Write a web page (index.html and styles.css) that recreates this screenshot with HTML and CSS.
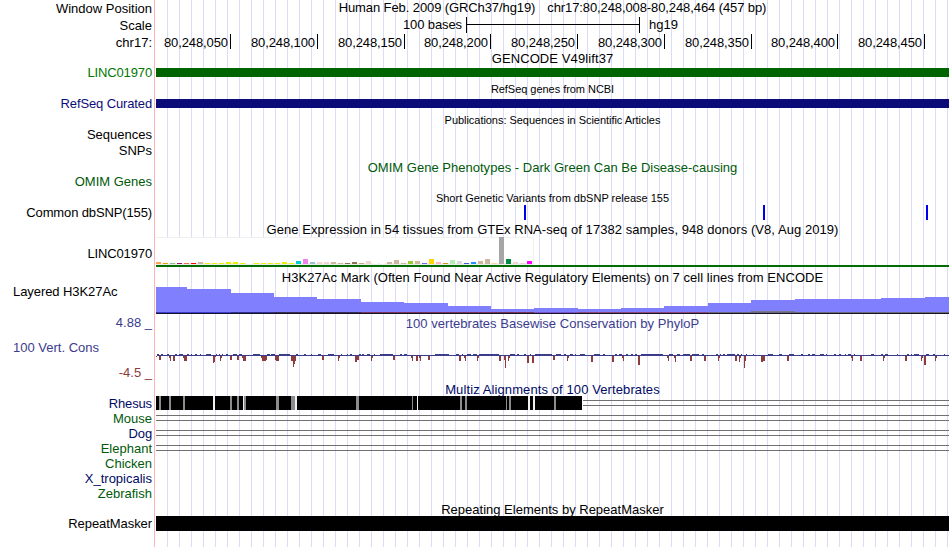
FILE: index.html
```html
<!DOCTYPE html>
<html lang="en">
<head>
<meta charset="utf-8">
<title>chr17:80,248,008-80,248,464</title>
<link rel="stylesheet" href="styles.css">
</head>
<body>
<main class="browser">
  <div class="row ruler"><div class="label low">Window Position</div><div class="title region"><span>Human Feb. 2009 (GRCh37/hg19)</span><span>chr17:80,248,008-80,248,464 (457 bp)</span></div></div>
  <div class="row ruler"><div class="label low">Scale</div><div class="scale"><span class="scale-name">100 bases</span><span class="scale-bar"></span><span>hg19</span></div></div>
  <div class="row ruler"><div class="label low">chr17:</div><div class="ticks" id="ticks"></div></div>

  <div class="row head gencode"><div class="title wide">GENCODE V49lift37</div></div>
  <div class="row item"><div class="label green narrow">LINC01970</div><div class="bar bar-green"></div></div>
  <div class="row head small-head"><div class="title small tight">RefSeq genes from NCBI</div></div>
  <div class="row item"><div class="label navy narrow">RefSeq Curated</div><div class="bar bar-navy"></div></div>
  <div class="row head small-head"><div class="title small tight">Publications: Sequences in Scientific Articles</div></div>
  <div class="row ruler-short"><div class="label">Sequences</div></div>
  <div class="row item"><div class="label">SNPs</div></div>
  <div class="row head omim"><div class="title forest omim-title">OMIM Gene Phenotypes - Dark Green Can Be Disease-causing</div></div>
  <div class="row item"><div class="label forest">OMIM Genes</div></div>
  <div class="row head small-head"><div class="title small">Short Genetic Variants from dbSNP release 155</div></div>
  <div class="row item"><div class="label narrow">Common dbSNP(155)</div><svg class="plot" id="snps" viewBox="156 205 793 15" height="15"></svg></div>
  <div class="row head gtex-head"><div class="title gtex-title">Gene Expression in 54 tissues from GTEx RNA-seq of 17382 samples, 948 donors (V8, Aug 2019)</div></div>
  <div class="row gtex"><div class="label narrow">LINC01970</div><svg class="plot" id="gtex" viewBox="156 237 793 31" height="31"></svg></div>
  <div class="row head omim"><div class="title histone-title">H3K27Ac Mark (Often Found Near Active Regulatory Elements) on 7 cell lines from ENCODE</div></div>
  <div class="row histone"><div class="label left slim">Layered H3K27Ac</div><svg class="plot" id="histone" viewBox="156 284 793 30" height="30"></svg></div>
  <div class="row phylop-head"><div class="label low slate">4.88 _</div><div class="title slate phylop-title">100 vertebrates Basewise Conservation by PhyloP</div></div>
  <div class="row phylop"><div class="phylop-labels"><div class="label left slate">100 Vert. Cons</div><div class="label brick">-4.5 _</div></div><svg class="plot" id="phylop" viewBox="156 331 793 49" height="49"></svg></div>
  <div class="row head omim"><div class="title ink wide">Multiz Alignments of 100 Vertebrates</div></div>
  <div class="row item"><div class="label ink narrow">Rhesus</div><svg class="plot" id="rhesus" viewBox="156 396 793 15" height="15"></svg></div>
  <div class="row item"><div class="label forest">Mouse</div><div class="gap-lines"></div></div>
  <div class="row item"><div class="label ink narrow">Dog</div><div class="gap-lines"></div></div>
  <div class="row item"><div class="label forest">Elephant</div><div class="gap-lines"></div></div>
  <div class="row item"><div class="label forest">Chicken</div></div>
  <div class="row item"><div class="label ink">X_tropicalis</div></div>
  <div class="row item"><div class="label forest">Zebrafish</div></div>
  <div class="row head repeat-head"><div class="title">Repeating Elements by RepeatMasker</div></div>
  <div class="row item"><div class="label slim">RepeatMasker</div><div class="bar-full"></div></div>
</main>
<script src="tracks.js"></script>
</body>
</html>
```
FILE: styles.css
```css
body {
  margin: 0;
  background: #fff;
  color: #000;
  font: 13px/15px "Liberation Sans", Arial, sans-serif;
}

/* Guide lines every 12px, with the red divider left of the plot */
.browser {
  width: 949px;
  height: 547px;
  overflow: hidden;
  background:
    linear-gradient(#ffb4b4, #ffb4b4) 154px 0 / 1px 100% no-repeat,
    repeating-linear-gradient(to right, #dcdcf8 0 1px, transparent 1px 12px) 167px 0 / 782px 100% no-repeat,
    #fff;
}

.row {
  display: grid;
  grid-template-columns: 152px 793px;
  column-gap: 4px;
  align-items: start;
  white-space: nowrap;
}
.ruler { height: 17px; }
.item { height: 15px; }
.ruler-short { height: 16px; }
.head { height: 16px; box-sizing: border-box; padding-top: 2px; }
.head .title { grid-column: 2; }
.gencode { height: 14px; padding-top: 0; }
.small-head { padding-top: 3px; }
.item + .head.gtex-head { height: 17px; }
.repeat-head { height: 15px; padding-top: 1px; }
.item + .small-head { height: 16px; }

.label { text-align: right; height: 15px; }
.low { padding-top: 1px; }
.left { text-align: left; padding-left: 13px; }
.narrow { letter-spacing: -0.13px; }
.slim { letter-spacing: -0.07px; }
.title { text-align: center; height: 15px; }
.small { font-size: 11px; line-height: 12px; height: 12px; }
.tight { letter-spacing: -0.04px; }
.wide { letter-spacing: 0.1px; }
.omim-title { letter-spacing: 0.02px; }
.gtex-title { letter-spacing: 0.05px; }
.histone-title { letter-spacing: 0.045px; }
.phylop-title { letter-spacing: 0.03px; }

.region { display: flex; justify-content: center; gap: 12px; letter-spacing: -0.1px; }
.scale { display: flex; height: 17px; }
.scale-name { width: 306px; margin-right: 4px; text-align: right; letter-spacing: -0.1px; }
.scale-bar {
  width: 172px;
  height: 16px;
  margin-right: 9px;
  border: solid #000;
  border-width: 0 1px;
  background: linear-gradient(#000, #000) 0 7px / 100% 1px no-repeat;
}
.ticks { display: flex; height: 17px; }
.tick {
  box-sizing: border-box;
  height: 15px;
  padding: 1px 2px 0 0;
  border-right: 1px solid #000;
  text-align: right;
  letter-spacing: -0.1px;
}

.green { color: #007800; }
.forest { color: #005a0a; }
.navy { color: #0c0c78; }
.ink { color: #000a64; }
.slate { color: #3c3c8c; }
.brick { color: #8c3c3c; }

.bar { height: 9px; margin-top: 3px; }
.bar-green { background: #006400; }
.bar-navy { background: #0c0c78; }
.bar-full { height: 15px; background: #000; }
.plot { display: block; width: 793px; shape-rendering: crispEdges; }

.gtex { height: 31px; }
.gtex .label { padding-top: 9px; }
.histone { height: 30px; }
.phylop-head { height: 17px; }
.phylop-head .title { padding-top: 2px; }
.phylop { height: 49px; }
.phylop-labels { display: grid; row-gap: 10px; padding-top: 9px; }

.gap-lines {
  height: 4px;
  margin-top: 4px;
  border: solid #707070;
  border-width: 1px 0;
}
```
FILE: tracks.js
```js
const byId = id => document.getElementById(id);

function draw(svg, fill, d) {
  const path = document.createElementNS('http://www.w3.org/2000/svg', 'path');
  path.setAttribute('fill', fill);
  path.setAttribute('d', d);
  svg.appendChild(path);
}
const box = (x, y, w, h) => `M${x} ${y}h${w}v${h}h${-w}z`;

/* Coordinate ruler: label and width of each interval */
[['80,248,050', 75], ['80,248,100', 87], ['80,248,150', 87], ['80,248,200', 86], ['80,248,250', 87],
 ['80,248,300', 87], ['80,248,350', 87], ['80,248,400', 86], ['80,248,450', 87]].forEach(([text, width]) => {
  const tick = document.createElement('span');
  tick.className = 'tick';
  tick.style.width = width + 'px';
  tick.textContent = text;
  byId('ticks').appendChild(tick);
});

/* Common variants */
draw(byId('snps'), '#0000f0', [524, 763, 926].map(x => box(x, 205, 2, 15)).join(''));

/* Expression per tissue: colour and height */
const gtex = byId('gtex');
draw(gtex, '#f0f0f0', box(156, 237, 378, 1) + box(533, 237, 1, 27));
draw(gtex, '#fff', box(156, 238, 377, 27));
draw(gtex, '#ececec', box(156, 263, 377, 2));
const tan = '#cdb79e', yellow = '#eeee00', rose = '#eed5d2';
[['#ffa54f', 2], ['#ee9a00', 1], ['#8fbc8f', 1], ['#8b1c62', 1], ['#ee6a50', 1], ['#ff0000', 1], [tan, 2],
 [yellow, 1], [yellow, 1], [yellow, 1], [yellow, 2], [yellow, 2], [yellow, 1], ['#fff', 1], [yellow, 1],
 [yellow, 1], [yellow, 1], [yellow, 1], [yellow, 2], [yellow, 1], ['#00cdcd', 3], ['#ee82ee', 5],
 ['#9ac0cd', 2], [rose, 2], [rose, 2], [tan, 2], [tan, 1], ['#8b7355', 1], ['#8b7355', 2], ['#cdaa7d', 1],
 [rose, 3], ['#fff', 1], ['#fff', 1], [tan, 2], [tan, 4], [tan, 1], ['#9acd32', 3], [tan, 3],
 ['#7a67ee', 1], ['#ffd700', 5], ['#ffb6c1', 2], ['#cd9b1d', 1], ['#b4eeb4', 4], ['#d9d9d9', 3],
 ['#3a5fcd', 1], ['#1e90ff', 2], [tan, 3], [tan, 5], ['#ffd39b', 1], ['#a6a6a6', 27], ['#008b45', 5],
 [rose, 2], [rose, 1], ['#ff00ff', 3]].forEach(([fill, h], i) => draw(gtex, fill, box(156 + 7 * i, 264 - h, 5, h)));
draw(gtex, '#006e00', box(156, 265, 793, 2));

/* Histone signal: x and top of each step */
const histone = byId('histone');
const steps = [[156, 287], [187, 289], [231, 293], [274, 297], [317, 299], [361, 302], [404, 303], [448, 306],
  [491, 309], [534, 308], [578, 309], [621, 308], [664, 306], [708, 303], [751, 300], [795, 299], [881, 298], [925, 297], [949, 297]];
draw(histone, '#8080ff', steps.slice(0, -1).map(([x, y], i) => box(x, y, steps[i + 1][0] - x, 313 - y)).join(''));
[[156, 231, '#3c3cc8'], [231, 274, '#30308c'], [274, 361, '#3a2a50'], [361, 534, '#78325a'], [534, 578, '#7850c8'],
 [578, 708, '#8c4678'], [708, 949, '#6e6478']].forEach(([a, b, fill]) => draw(histone, fill, box(a, 312, b - a, 1)));
draw(histone, '#78788c', box(751, 311, 44, 1));
draw(histone, '#14142d', box(156, 313, 793, 1));

/* Conservation: negative scores as x, width, depth; raised positive runs as start, end in thirds of a pixel */
const phylop = byId('phylop');
const negative = [[156,1,1],[159,2,4],[169,1,2],[170,1,5],[173,2,5],[183,1,2],[184,3,5],[213,1,7],[214,1,6],[215,1,1],
  [220,1,5],[221,1,2],[230,2,4],[237,2,4],[242,1,2],[243,3,5],[261,1,2],[262,4,5],[266,1,4],[275,1,4],[276,3,5],
  [291,2,5],[293,1,11],[294,1,8],[295,1,5],[322,2,4],[338,1,5],[339,1,2],[355,2,6],[357,2,4],[371,1,5],[372,1,2],
  [393,2,4],[411,1,2],[412,1,5],[416,2,5],[419,1,2],[420,1,5],[428,2,4],[459,2,5],[464,1,2],[465,1,5],[477,1,5],
  [478,1,2],[499,2,5],[504,1,4],[505,1,12],[508,1,5],[509,1,2],[527,2,7],[532,2,7],[553,2,4],[567,1,5],[568,1,2],
  [591,2,6],[612,2,6],[622,1,2],[623,1,5],[638,2,9],[667,1,2],[668,1,5],[674,1,2],[675,1,6],[690,2,5],[704,2,5],
  [718,1,5],[719,1,2],[735,2,5],[739,1,6],[740,1,2],[744,1,12],[745,1,5],[761,2,6],[763,2,5],[787,2,5],[851,1,2],
  [852,1,5],[860,2,5],[883,1,5],[884,1,2],[905,2,5],[921,1,5],[922,1,2],[924,2,9],[935,1,5],[936,1,2]];
const runs = (origin, pairs) => pairs.map(([a, b]) => box(origin + a / 3, 354, (b - a) / 3, 1)).join('');
draw(phylop, '#3c3c8c', box(157, 355, 792, 1) +
  runs(150, [[21,27],[33,39],[51,57],[75,81],[87,99],[111,117],[123,126],[135,141],[150,153],[168,183],[198,201],[207,210],[216,219],
    [228,234],[249,261],[267,276],[309,330],[351,360],[363,375],[387,420],[438,444],[462,468],[483,486],[504,513],[534,552],
    [573,576],[591,594],[600,606],[627,633],[636,642],[651,660],[672,675],[690,729],[750,756],[762,771]]) +
  runs(415, [[60,102],[123,132],[141,144],[156,168],[174,186],[192,252],[285,300],[306,312],[327,333],[345,348],[360,411],
    [423,438],[447,453],[465,474],[480,483],[495,510],[537,555],[564,570],[600,606],[612,621],[633,639],[648,654],
    [660,666],[678,744],[762,774],[786,795]]) +
  runs(680, [[9,30],[36,57],[66,72],[108,114],[120,123],[129,135],[141,165],[171,177],[183,186],[198,201],[219,222],
    [264,279],[297,306],[327,342],[363,369],[384,390],[396,405],[420,432],[438,441],[462,468],[477,483],[495,498],
    [504,513],[522,525],[573,582],[603,609],[615,624],[651,654],[681,687],[693,696],[702,717],[738,747],[759,765],[792,795]]));
draw(phylop, '#8c3c3c', negative.map(([x, w, h]) => box(x, 356, w, h)).join(''));

/* Rhesus alignment: black block with mismatches, then an unaligned stretch */
const rhesus = byId('rhesus');
draw(rhesus, '#000', box(156, 396, 426, 14));
draw(rhesus, '#8c8c8c', [[159,2],[169,2],[183,2],[230,2],[237,2],[244,2],[276,3],[291,4],[356,3],[412,1],[460,2],[465,2],
  [506,1],[509,2],[554,2]].map(([x, w]) => box(x, 396, w, 14)).join(''));
draw(rhesus, '#f0f0f0', [[213,2],[243,1],[295,2],[417,1],[528,2],[533,2]].map(([x, w]) => box(x, 396, w, 14)).join(''));
draw(rhesus, '#707070', box(583, 400, 366, 1) + box(583, 405, 366, 1));
```
